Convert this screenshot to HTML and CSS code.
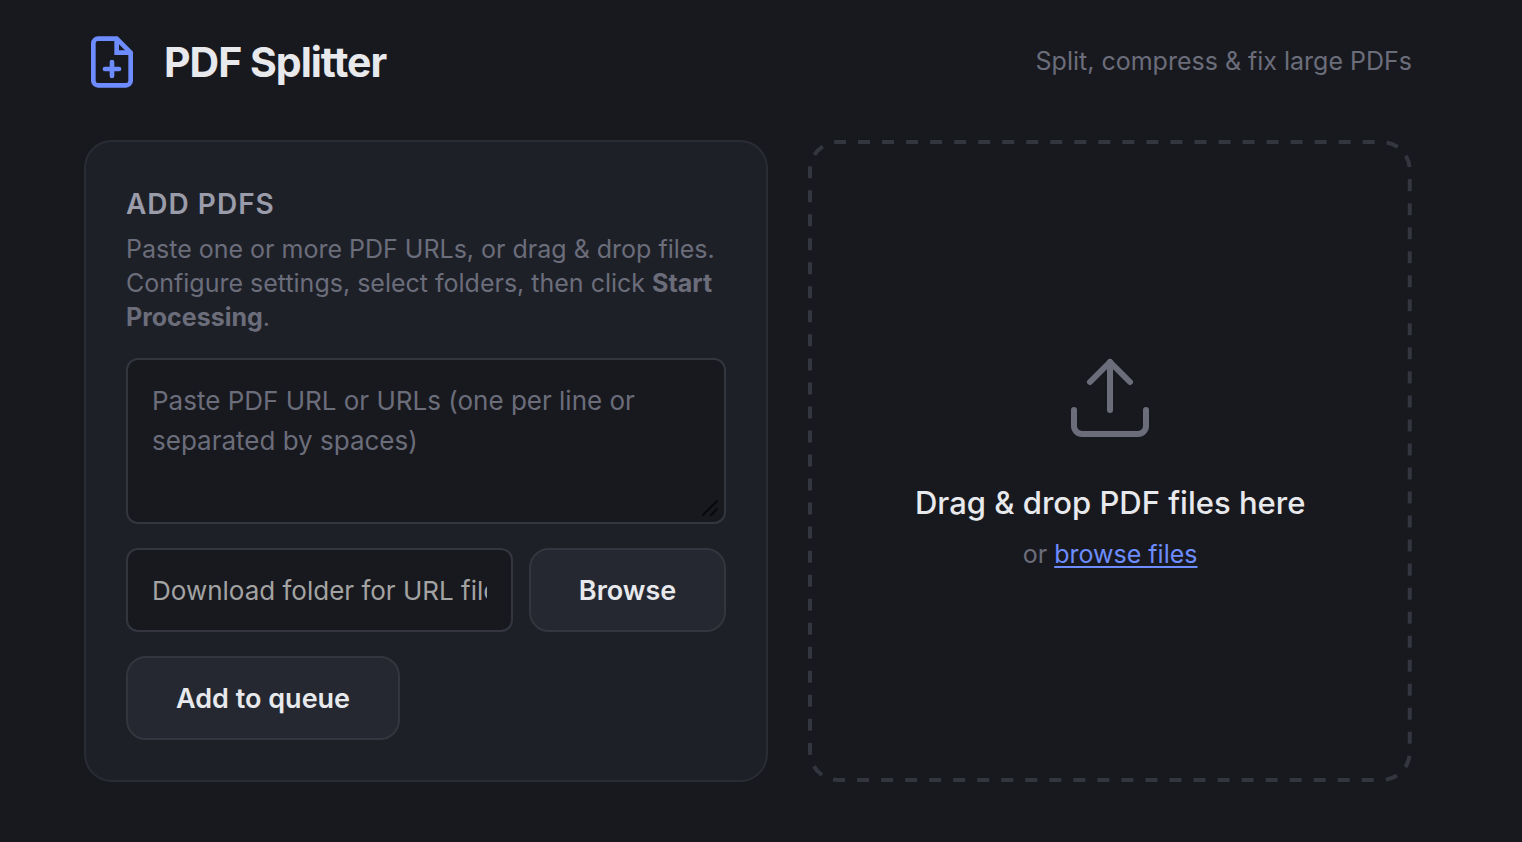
FILE: index.html
```html
<!DOCTYPE html>
<html lang="en">
<head>
  <meta charset="UTF-8" />
  <meta name="viewport" content="width=device-width, initial-scale=1.0" />
  <title>PDF Splitter</title>
  <link rel="stylesheet" href="styles.css">
</head>
<body>

<div class="app">
  <header class="header">
    <div class="logo">
      <svg class="logo-icon" viewBox="0 0 24 24" aria-hidden="true">
        <path d="M14 2H6a2 2 0 0 0-2 2v16a2 2 0 0 0 2 2h12a2 2 0 0 0 2-2V8z" />
        <path d="M14 2v6h6" />
        <path class="plus" d="M12 12v6M9 15h6" />
      </svg>
      <h1>PDF Splitter</h1>
    </div>
    <p class="tagline">Split, compress &amp; fix large PDFs</p>
  </header>

  <main class="columns">
    <section class="card">
      <h2>Add PDFs</h2>
      <p class="hint">Paste one or more PDF URLs, or drag &amp; drop files. Configure settings, select folders, then click <strong>Start Processing</strong>.</p>

      <div class="url-box">
        <textarea class="field url-input" aria-label="PDF URLs" placeholder="Paste PDF URL or URLs (one per line or separated by spaces)"></textarea>
        <svg class="grip" viewBox="0 0 16 16" aria-hidden="true">
          <path d="M1 15L15 1M9 15l6-6" />
        </svg>
      </div>

      <div class="folder-row">
        <input class="field folder-input" type="text" aria-label="Download folder" placeholder="Download folder for URL files">
        <button class="btn" type="button">Browse</button>
      </div>

      <button class="btn" type="button">Add to queue</button>
    </section>

    <section class="drop-zone">
      <svg class="drop-border" aria-hidden="true">
        <rect x="2" y="2" width="100%" height="100%" rx="28" pathLength="2424" />
      </svg>
      <svg class="upload-icon" viewBox="0 0 24 24" aria-hidden="true">
        <path d="M21 15v4a2 2 0 0 1-2 2H5a2 2 0 0 1-2-2v-4" />
        <path d="M17 8l-5-5-5 5" />
        <path d="M12 3v12" />
      </svg>
      <p class="drop-title">Drag &amp; drop PDF files here</p>
      <p class="drop-sub">or <a href="#">browse files</a></p>
    </section>
  </main>
</div>

</body>
</html>
```

FILE: styles.css
```css
* {
  box-sizing: border-box;
}
body {
  margin: 0;
  background-color: #18191e;
  color: #e8e9ed;
  font-family: Inter, "Liberation Sans", sans-serif;
  font-size: 25px;
}
h1, h2, p {
  margin: 0;
}
.app {
  padding: 34px 110px 60px 84px;
}
.header {
  display: flex;
  justify-content: space-between;
  align-items: center;
  margin-bottom: 50px;
}
.logo {
  display: flex;
  align-items: center;
  gap: 24px;
}
.logo h1 {
  font-size: 41px;
  line-height: 56px;
  font-weight: 700;
  letter-spacing: -1px;
}
.logo-icon {
  width: 56px;
  height: 56px;
  fill: none;
  stroke: #6c8cff;
  stroke-width: 2;
}
.plus {
  stroke-linecap: round;
}
.tagline {
  padding-bottom: 2px;
  color: #6b6d7b;
}
.columns {
  display: grid;
  grid-template-columns: 17fr 15fr;
  gap: 40px;
}
.card {
  background-color: #1e2028;
  border: 2px solid #2a2c35;
  border-radius: 28px;
  padding: 40px;
}
.card h2 {
  margin: 4px 0 10px;
  font-size: 28px;
  line-height: 36px;
  font-weight: 600;
  letter-spacing: 1px;
  text-transform: uppercase;
  color: #9a9caa;
}
.hint {
  margin-bottom: 24px;
  line-height: 34px;
  color: #6b6d7b;
}
.field {
  display: block;
  width: 100%;
  background-color: #18191e;
  border: 2px solid #33353f;
  border-radius: 12px;
  padding: 21px 24px;
  color: #e8e9ed;
  font-family: inherit;
  font-size: 26px;
  outline: none;
}
.url-box {
  position: relative;
  margin-bottom: 24px;
}
.url-input {
  height: 166px;
  line-height: 40px;
  resize: none;
}
.url-input::placeholder {
  color: #6b6d7b;
}
.grip {
  position: absolute;
  right: 8px;
  bottom: 8px;
  width: 16px;
  height: 16px;
  fill: none;
  stroke: #08090b;
  stroke-width: 2;
  stroke-linecap: round;
}
.folder-row {
  display: flex;
  gap: 16px;
  margin-bottom: 24px;
}
.folder-input {
  flex: 1;
  min-width: 0;
  height: 84px;
}
.folder-input::placeholder {
  color: #a3a3a3;
}
.btn {
  height: 84px;
  padding: 0 48px;
  background-color: #252830;
  border: 2px solid #33353f;
  border-radius: 20px;
  color: #e8e9ed;
  font-family: inherit;
  font-size: 27px;
  font-weight: 600;
  cursor: pointer;
}
.btn:hover {
  background-color: #2d303a;
}
.drop-zone {
  position: relative;
  display: flex;
  flex-direction: column;
  align-items: center;
  justify-content: center;
}
.drop-border {
  position: absolute;
  top: 0;
  left: 0;
  width: 100%;
  height: 100%;
  fill: none;
  stroke: #33353f;
  stroke-width: 4;
  stroke-dasharray: 12 12;
  stroke-dashoffset: 4;
}
.drop-border rect {
  width: calc(100% - 4px);
  height: calc(100% - 4px);
}
.upload-icon {
  width: 96px;
  height: 96px;
  margin-bottom: 36px;
  fill: none;
  stroke: #6b6d7b;
  stroke-width: 1.5;
  stroke-linecap: round;
  stroke-linejoin: round;
}
.drop-title {
  margin-bottom: 12px;
  font-size: 31px;
  line-height: 42px;
  font-weight: 500;
}
.drop-sub {
  line-height: 36px;
  color: #6b6d7b;
}
.drop-sub a {
  color: #6c8cff;
  text-underline-offset: 3px;
}
```
